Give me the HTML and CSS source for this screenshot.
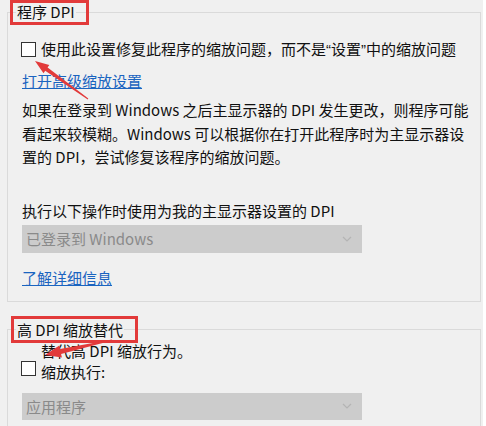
FILE: index.html
```html
<!DOCTYPE html>
<html lang="zh-CN">
<head>
<meta charset="utf-8">
<title>程序 DPI</title>
<link rel="stylesheet" href="styles.css">
</head>
<body>
<div class="page">
  <fieldset class="group group-first">
    <legend class="group-title">程序 DPI</legend>
    <div class="group-body">
      <div class="check-row">
        <span class="checkbox"></span>
        <span class="check-label">使用此设置修复此程序的缩放问题，而不是<span class="q">“</span>设置<span class="q">”</span>中的缩放问题</span>
      </div>
      <a class="link link-top" href="#">打开高级缩放设置</a>
      <p class="para">如果在登录到 Windows 之后主显示器的 DPI 发生更改，则程序可能<br>看起来较模糊。Windows 可以根据你在打开此程序时为主显示器设<br>置的 DPI，尝试修复该程序的缩放问题。</p>
      <div class="field-label">执行以下操作时使用为我的主显示器设置的 DPI</div>
      <div class="select"><span>已登录到 Windows</span><svg class="chev" width="10" height="6" viewBox="0 0 10 6"><path d="M1 1 L5 5 L9 1" fill="none" stroke="#b4b4b4" stroke-width="1.2"/></svg></div>
      <a class="link link-more" href="#">了解详细信息</a>
    </div>
  </fieldset>

  <fieldset class="group group-second">
    <legend class="group-title">高 DPI 缩放替代</legend>
    <div class="group-body">
      <div class="check-row check-row-2">
        <span class="checkbox checkbox-low"></span>
        <span class="check-label two-line">替代高 DPI 缩放行为。<br>缩放执行:</span>
      </div>
      <div class="select select-2"><span>应用程序</span><svg class="chev" width="10" height="6" viewBox="0 0 10 6"><path d="M1 1 L5 5 L9 1" fill="none" stroke="#b4b4b4" stroke-width="1.2"/></svg></div>
    </div>
  </fieldset>

  <div class="mark mark-1"></div>
  <div class="mark mark-2"></div>
  <svg class="arrows" width="486" height="426" viewBox="0 0 486 426">
    <polygon fill="#e23a3a" points="35,61 49.3,65.1 47.6,67.6 88.3,98.6 87.7,99.4 45.2,70.8 43.5,73.3"/>
    <polygon fill="#e23a3a" points="45,355 59.3,345.6 60.1,349.1 111.9,339.5 112.1,340.5 61.1,353.9 61.9,357.4"/>
  </svg>
</div>
</body>
</html>
```
FILE: styles.css
```css
html, body {
  margin: 0;
  padding: 0;
  background: #ffffff;
}
body {
  font-family: "Noto Sans CJK SC", "Noto Sans", sans-serif;
  font-size: 15px;
  color: #111;
}
.page {
  position: relative;
  width: 483px;
  height: 426px;
  overflow: hidden;
  background: #f0f0f0;
  padding-top: 2px;
  box-sizing: border-box;
}
.group {
  margin: 0 0 0 7px;
  width: 474px;
  box-sizing: border-box;
  border: 1px solid #dadada;
  padding: 0;
  min-width: 0;
}
.group-second {
  margin-top: 18px;
  height: 200px;
}
.group-title {
  margin-left: 8px;
  padding: 0 1px;
  line-height: 20px;
  height: 20px;
}
.group-body {
  padding: 0 0 13px 14px;
}
.check-row {
  display: flex;
  align-items: flex-start;
  margin-top: 17px;
  line-height: 20px;
}
.checkbox {
  flex: none;
  width: 13px;
  height: 13px;
  border: 1px solid #333;
  background: #fff;
  margin: 3px 5px 0 -1px;
}
.check-label .q {
  font-family: "Liberation Sans", sans-serif;
}
.check-row-2 {
  margin-top: 0;
  line-height: 21px;
}
.checkbox-low {
  margin-top: 21px;
}
.link {
  display: block;
  width: max-content;
  color: #1a64c0;
  text-decoration: underline;
  line-height: 20px;
}
.link-top {
  margin-top: 11px;
}
.para {
  margin: 7px 0 0 0;
  line-height: 23.5px;
  white-space: nowrap;
}
.field-label {
  margin-top: 32px;
  line-height: 20px;
}
.select {
  margin-top: 4px;
  width: 340px;
  height: 28px;
  box-sizing: border-box;
  background: #cccccc;
  color: #8a8a8a;
  display: flex;
  align-items: center;
  justify-content: space-between;
  padding: 0 10px 0 4px;
}
.select-2 {
  margin-top: 11px;
  height: 27px;
}
.link-more {
  margin-top: 15px;
}
.mark {
  position: absolute;
  border: 3px solid #e23a3a;
  box-sizing: border-box;
}
.mark-1 {
  left: 10px;
  top: 0px;
  width: 79px;
  height: 25px;
}
.mark-2 {
  left: 11px;
  top: 316px;
  width: 127px;
  height: 27px;
}
.arrows {
  position: absolute;
  left: 0;
  top: 0;
  pointer-events: none;
}
```
